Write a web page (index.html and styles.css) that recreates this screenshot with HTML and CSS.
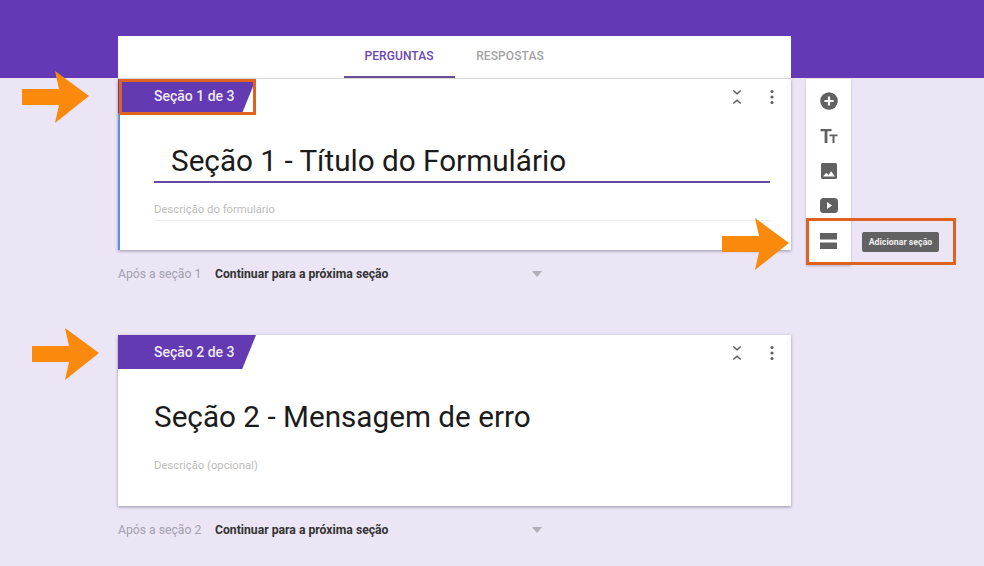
FILE: index.html
```html
<!DOCTYPE html>
<html lang="pt">
<head>
<meta charset="utf-8">
<title>Formulário</title>
<link rel="stylesheet" href="styles.css">
</head>
<body>
<div class="page">
  <main class="form">
    <nav class="tabs">
      <span class="tab active">PERGUNTAS</span>
      <span class="tab">RESPOSTAS</span>
    </nav>
    <section class="card card-active">
      <div class="card-top">
        <div class="badge">Seção 1 de 3</div>
        <div class="actions">
          <svg class="icon" viewBox="0 0 16 18"><path d="M4.3 2.5L8 5.7l3.700-3.200M4.300 15.500L8 12.300l3.700 3.200" fill="none" stroke="#5f5f5f" stroke-width="1.5"/></svg>
          <svg class="icon" viewBox="0 0 16 18"><circle cx="8" cy="3.500" r="1.600" fill="#5f5f5f"/><circle cx="8" cy="9" r="1.600" fill="#5f5f5f"/><circle cx="8" cy="14.500" r="1.600" fill="#5f5f5f"/></svg>
        </div>
      </div>
      <h1 class="title title-edit">Seção 1 - Título do Formulário</h1>
      <p class="desc desc-line">Descrição do formulário</p>
    </section>
    <div class="after">
      <span class="after-label">Após a seção 1</span>
      <strong class="after-value">Continuar para a próxima seção</strong>
      <span class="caret"></span>
    </div>
    <section class="card">
      <div class="card-top">
        <div class="badge">Seção 2 de 3</div>
        <div class="actions">
          <svg class="icon" viewBox="0 0 16 18"><path d="M4.300 2.500L8 5.700l3.700-3.200M4.300 15.500L8 12.300l3.700 3.200" fill="none" stroke="#5f5f5f" stroke-width="1.5"/></svg>
          <svg class="icon" viewBox="0 0 16 18"><circle cx="8" cy="3.500" r="1.600" fill="#5f5f5f"/><circle cx="8" cy="9" r="1.600" fill="#5f5f5f"/><circle cx="8" cy="14.500" r="1.600" fill="#5f5f5f"/></svg>
        </div>
      </div>
      <h1 class="title">Seção 2 - Mensagem de erro</h1>
      <p class="desc">Descrição (opcional)</p>
    </section>
    <div class="after">
      <span class="after-label">Após a seção 2</span>
      <strong class="after-value">Continuar para a próxima seção</strong>
      <span class="caret"></span>
    </div>
  </main>
  <aside class="tools">
    <svg class="tool tool-plus" viewBox="0 0 18 18"><circle cx="9" cy="9" r="8.800" fill="#616161"/><path d="M9 4.400v9.200M4.400 9h9.200" stroke="#fff" stroke-width="2.200"/></svg>
    <svg class="tool tool-text" viewBox="0 0 18 14"><path d="M0.500 0h11v2.200H7.400V14H4.600V2.200H0.500zM9.500 5.400h8v1.800h-3V14h-2V7.200h-3z" fill="#616161"/></svg>
    <svg class="tool tool-image" viewBox="0 0 16 16"><rect width="16" height="16" rx="1.500" fill="#616161"/><path d="M2 13.500l3.200-3.800 2.200 2.200 2.800-3.700 3.800 5.300z" fill="#fff"/></svg>
    <svg class="tool tool-video" viewBox="0 0 18 15"><rect width="18" height="15" rx="3.500" fill="#616161"/><path d="M7 4v7l5-3.500z" fill="#fff"/></svg>
    <svg class="tool tool-section" viewBox="0 0 17 16"><path d="M0 0h17v6.500H0zM0 9.500h17V16H0z" fill="#616161"/></svg>
  </aside>
</div>
<div class="tooltip">Adicionar seção</div>
<div class="mark mark-badge"></div>
<div class="mark mark-tool"></div>
<svg class="arrow arrow-1" viewBox="0 0 68 52"><path d="M0 18h37L33 0l34 25-34 27 4-18H0z" fill="#fb8a0c"/></svg>
<svg class="arrow arrow-2" viewBox="0 0 68 52"><path d="M0 18h37L33 0l34 25-34 27 4-18H0z" fill="#fb8a0c"/></svg>
<svg class="arrow arrow-3" viewBox="0 0 68 52"><path d="M0 18h37L33 0l34 25-34 27 4-18H0z" fill="#fb8a0c"/></svg>
</body>
</html>
```
FILE: styles.css
```css
* { box-sizing: border-box; }
html, body { margin: 0; height: 100%; }
body {
  width: 984px;
  height: 566px;
  overflow: hidden;
  position: relative;
  font-family: Roboto, "Liberation Sans", sans-serif;
  background: linear-gradient(#6439b5 0, #6439b5 78px, #ebe5f6 78px);
}
.page {
  display: flex;
  align-items: flex-start;
  gap: 15px;
  padding: 36px 0 0 118px;
}
.form { width: 673px; flex: none; }
.tabs {
  height: 43px;
  background: #fff;
  border-bottom: 1px solid #e6e6e6;
  display: flex;
  justify-content: center;
}
.tab {
  width: 111px;
  height: 42px;
  line-height: 40px;
  text-align: center;
  font-size: 12px;
  font-weight: 500;
  color: #a3a3a3;
  letter-spacing: .1px;
}
.tab.active { color: #6b46ae; border-bottom: 2px solid #66509a; }
.card {
  height: 171px;
  background: #fff;
  box-shadow: 0 1px 3px rgba(60, 50, 90, .45);
  position: relative;
}
.card-active { border-left: 2px solid #5a95dc; }
.card-top { display: flex; justify-content: space-between; height: 34px; }
.badge {
  width: 138px;
  height: 34px;
  line-height: 35px;
  padding-left: 36px;
  background: #633ab2;
  clip-path: polygon(0 0, 100% 0, 90% 100%, 0 100%);
  color: #f0eaf8;
  font-size: 14px;
  font-weight: 500;
}
.card-active .badge { margin-left: -2px; }
.actions { display: flex; gap: 19px; padding: 9px 11px 0 0; }
.icon { width: 16px; height: 18px; }
.title {
  margin: 29px 0 0 36px;
  font-size: 29.7px;
  font-weight: 400;
  line-height: 38px;
  color: #1b1b1b;
}
.title-edit {
  margin: 29px 21px 0 34px;
  padding: 0 0 1px 17px;
  height: 41px;
  border-bottom: 2px solid #6648a8;
}
.desc {
  margin: 23px 0 0 36px;
  font-size: 11.3px;
  line-height: 14px;
  color: #bcbcbc;
}
.desc-line {
  margin: 20px 21px 0 34px;
  padding-bottom: 3px;
  height: 18px;
  border-bottom: 1px solid #ececec;
}
.after {
  height: 85px;
  padding-top: 17px;
  display: flex;
  align-items: flex-start;
  font-size: 12.2px;
  line-height: 14px;
}
.after-label { width: 97px; color: #a2a0aa; }
.after-value { width: 317px; color: #333; font-weight: 700; font-size: 12.2px; }
.caret {
  margin-top: 4px;
  border: 5px solid transparent;
  border-top: 6px solid #b0aeb6;
  border-bottom: 0;
}
.tools {
  width: 45px;
  height: 186px;
  margin-top: 43px;
  background: #fff;
  box-shadow: 0 1px 2px rgba(60, 50, 90, .3);
  display: flex;
  flex-direction: column;
  align-items: center;
  padding-top: 13px;
}
.tool { flex: none; }
.tool-plus { width: 18px; height: 18px; }
.tool-text { width: 18px; height: 14px; margin-top: 19px; }
.tool-image { width: 16px; height: 16px; margin-top: 20px; }
.tool-video { width: 18px; height: 15px; margin-top: 19px; }
.tool-section { width: 17px; height: 16px; margin-top: 20px; }
.tooltip {
  position: absolute;
  left: 862px;
  top: 232px;
  width: 77px;
  height: 20px;
  line-height: 20px;
  text-align: center;
  background: #626262;
  border-radius: 2px;
  color: #eee;
  font-size: 8.8px;
  font-weight: 700;
}
.mark { position: absolute; border: 3px solid #e0621f; }
.mark-badge { left: 119px; top: 79px; width: 136.5px; height: 36px; }
.mark-tool { left: 806px; top: 218px; width: 150px; height: 47px; }
.arrow { position: absolute; width: 68px; height: 52px; }
.arrow-1 { left: 22px; top: 71px; }
.arrow-2 { left: 722px; top: 218px; }
.arrow-3 { left: 32px; top: 328px; }
```
